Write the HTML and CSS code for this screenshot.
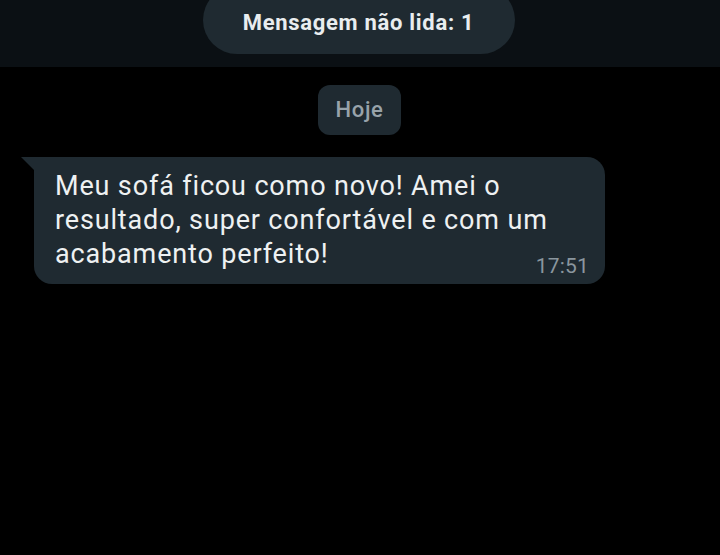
FILE: index.html
```html
<!DOCTYPE html>
<html lang="pt">
<head>
<meta charset="utf-8">
<link rel="stylesheet" href="styles.css">
</head>
<body>
<div class="topbar">
  <div class="unread">Mensagem não lida: 1</div>
</div>
<div class="chat">
  <div class="day"><span class="day-pill">Hoje</span></div>
  <div class="row">
    <div class="bubble">
      <svg class="tail" width="14" height="14" viewBox="0 0 14 14"><path d="M0 0 H14 V14 Z" fill="#1f2a31"/></svg>
      <p class="text">Meu sofá ficou como novo! Amei o resultado, super confortável e com um acabamento perfeito!</p>
      <span class="time">17:51</span>
    </div>
  </div>
</div>
</body>
</html>
```
FILE: styles.css
```css
html, body {
  margin: 0;
  padding: 0;
  background: #000;
  width: 720px;
  height: 555px;
  overflow: hidden;
  font-family: Roboto, "Liberation Sans", sans-serif;
}
.topbar {
  height: 67px;
  background: #0b1014;
  display: flex;
  justify-content: center;
  overflow: hidden;
}
.unread {
  margin-top: -14px;
  height: 68px;
  width: 312px;
  box-sizing: border-box;
  padding-top: 23px;
  border-radius: 34px;
  background: #1f2a31;
  color: #e9edef;
  font-weight: 700;
  font-size: 22px;
  letter-spacing: 0.7px;
  text-align: center;
  line-height: 28px;
  margin-left: -3px;
}
.chat {
  padding-top: 18px;
}
.day {
  display: flex;
  justify-content: center;
}
.day-pill {
  margin-left: -1px;
  width: 83px;
  height: 50px;
  box-sizing: border-box;
  border-radius: 12px;
  background: #1f2a31;
  color: #98a3aa;
  font-size: 22px;
  font-weight: 500;
  letter-spacing: 0.7px;
  line-height: 50px;
  text-align: center;
}
.row {
  padding: 22px 0 0 34px;
}
.bubble {
  position: relative;
  width: 571px;
  height: 127px;
  box-sizing: border-box;
  background: #1f2a31;
  border-radius: 0 18px 18px 18px;
  padding: 12px 16px 0 21px;
}
.tail {
  position: absolute;
  left: -13px;
  top: 0;
  display: block;
}
.text {
  margin: 0;
  font-size: 27px;
  letter-spacing: 0.85px;
  line-height: 34px;
  color: #eef1f2;
}
.time {
  position: absolute;
  right: 16px;
  bottom: 6px;
  font-size: 21px;
  letter-spacing: 0.2px;
  color: #8a969e;
}
```
